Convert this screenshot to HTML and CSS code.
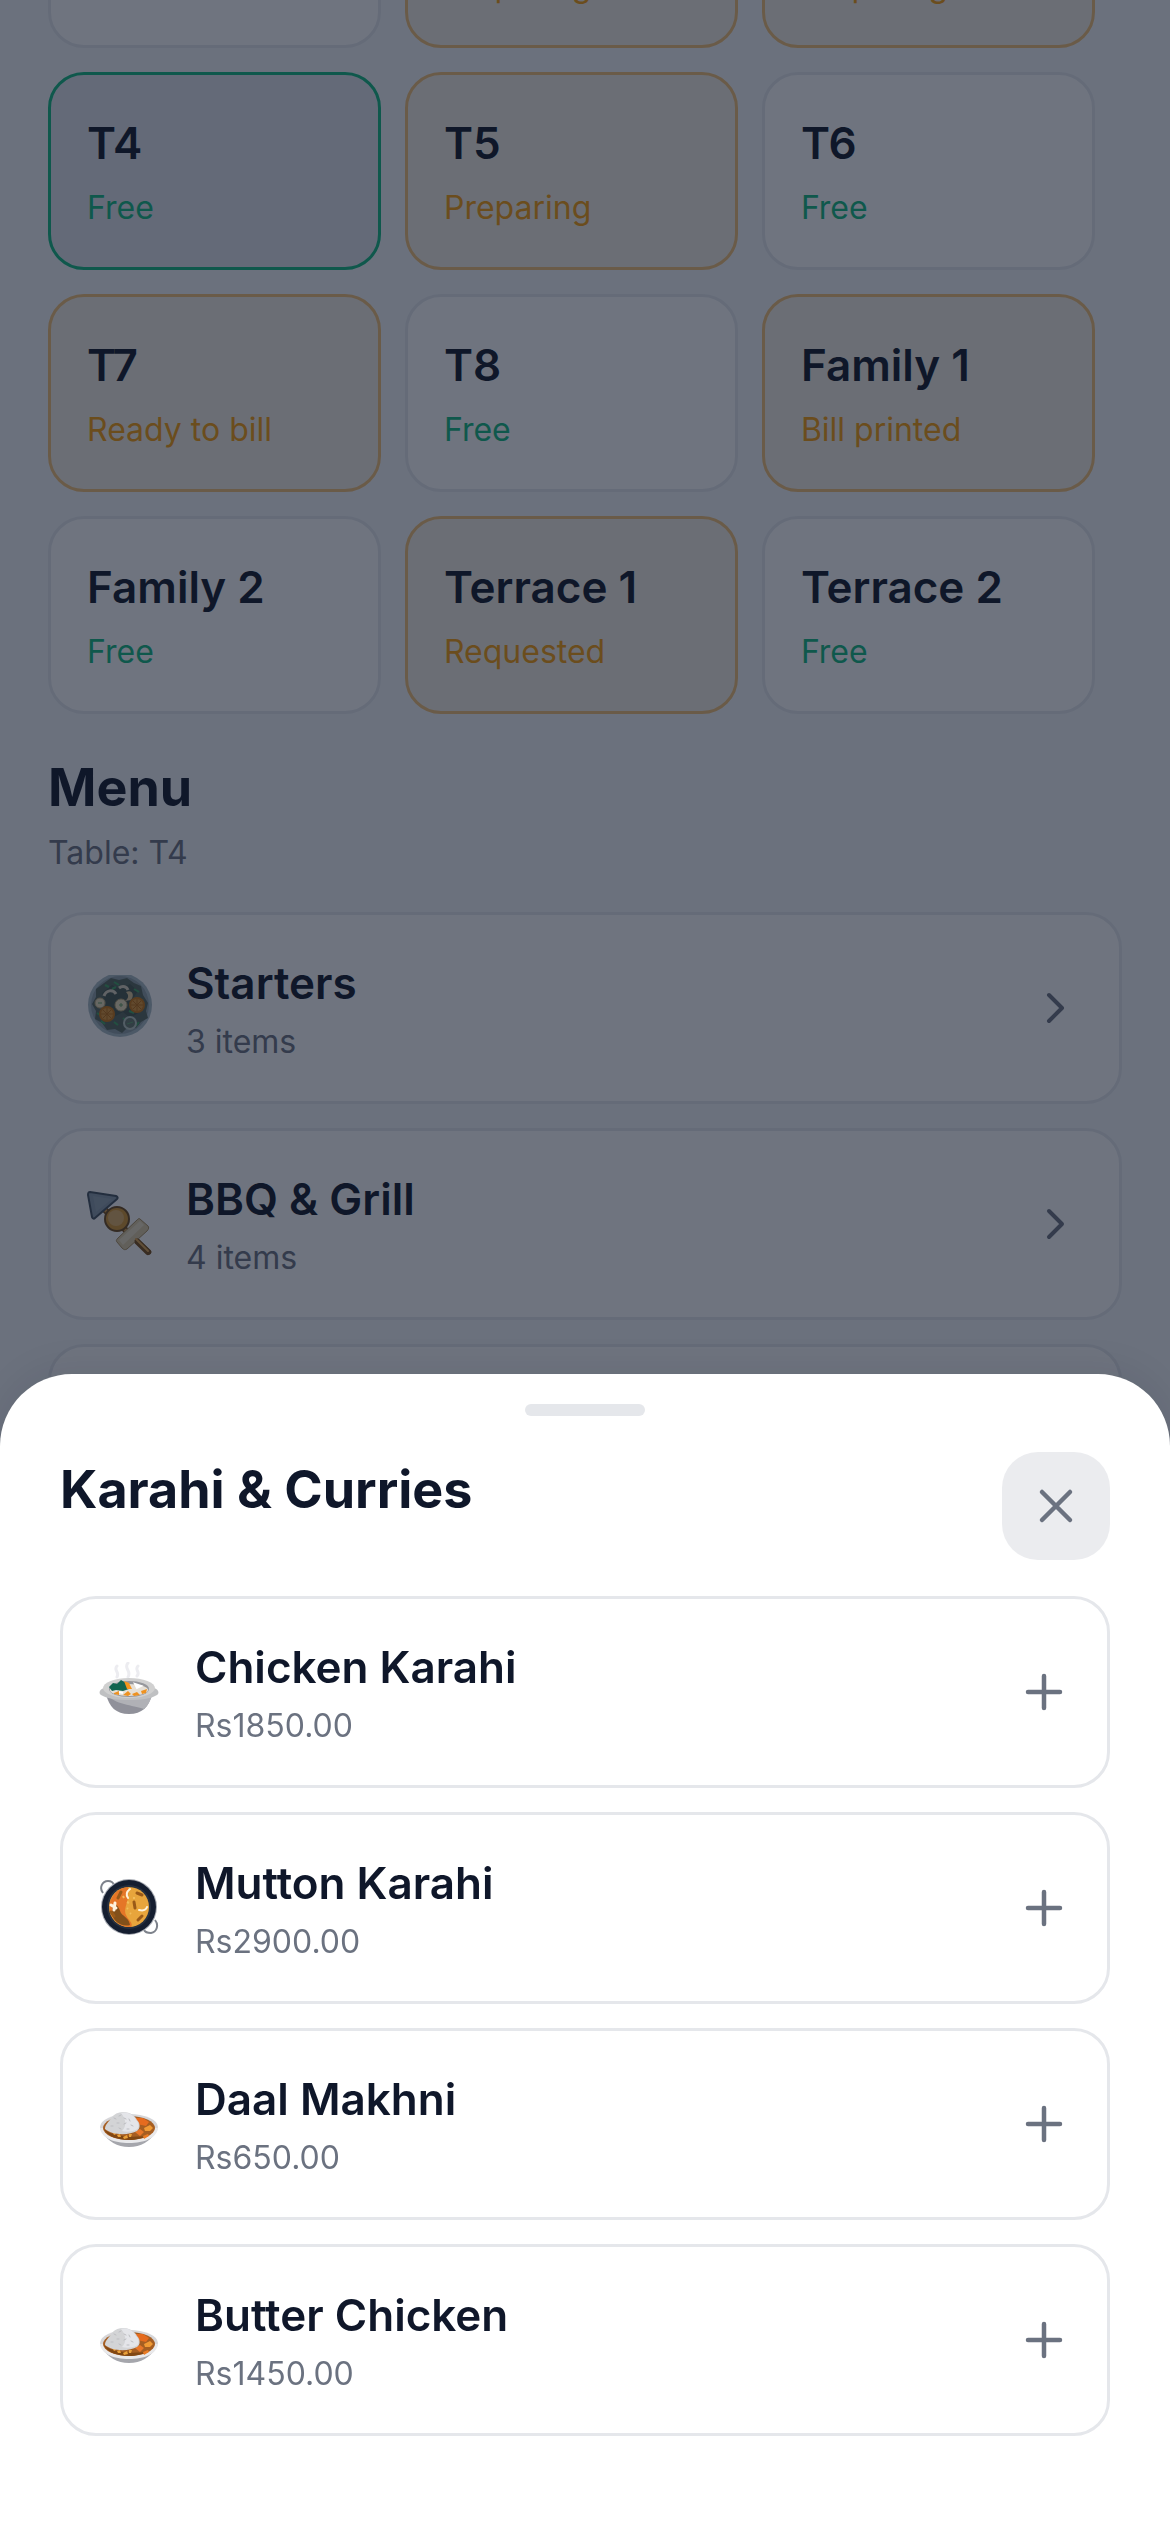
FILE: index.html
```html
<!DOCTYPE html>
<html lang="en">
<head>
	<meta charset="utf-8">
	<meta name="viewport" content="width=device-width, initial-scale=1">
	<title>Karahi &amp; Curries</title>
	<link rel="stylesheet" href="styles.css">
</head>
<body>
	<!-- shared icons -->
	<svg class="defs" aria-hidden="true">
		<symbol id="chevron" viewBox="0 0 54 54"><path d="M20 14l13 13-13 13" fill="none" stroke="currentColor" stroke-width="4" stroke-linecap="round" stroke-linejoin="round"/></symbol>
		<symbol id="plus" viewBox="0 0 54 54"><path d="M27 11v32M11 27h32" fill="none" stroke="currentColor" stroke-width="4.5" stroke-linecap="round"/></symbol>
		<symbol id="rice" viewBox="0 0 60 60">
			<ellipse cx="30" cy="33" rx="29" ry="13" fill="#d6d6d9"/>
			<path d="M3 38c6 9 15 15 27 15s21-6 27-15z" fill="#a5a6ac"/>
			<path d="M1 34c1 10 14 15 29 15s28-5 29-15z" fill="#e9e9eb"/>
			<ellipse cx="30" cy="34" rx="26" ry="12" fill="#a65e22"/>
			<path d="M5 35c3 7 13 11 25 11 7 0 14-2 18-4-12 1-34 2-43-7z" fill="#804713"/>
			<path d="M36 24l8 0 6 4-3 4-9-2z" fill="#e56b1f"/>
			<path d="M45 34l6-3 3 3-3 3-5 0z" fill="#f09a35"/>
			<path d="M36 38l5-3 4 3-4 4z" fill="#e8772a"/>
			<path d="M44 42l5-2 1 2-5 3z" fill="#ea7b24"/>
			<path d="M18 41l3-1 1 3-3 0zM24 43l4-2 1 3-4 1zM30 40l3 0-1 3-2 0zM14 39l2-1 1 2-2 1z" fill="#e9a13a"/>
			<path d="M6 35c0-5 4-7 6-11 3-4 7-6 12-6 8 0 12 4 14 8 3 3 4 8 0 11-7 4-24 5-32-2z" fill="#d3d4d6"/>
			<path d="M22 19c8-2 13 3 15 7 3 3 4 8 0 10-5 2-10 2-14 1 5-5 4-12-1-18z" fill="#e4e5e9"/>
			<path d="M15 24l2 1M20 22l2-1M25 24l2 1M30 25l1 2M18 29l2 0M25 30l2-1M32 31l2 1M12 32l2 0M20 34l2 1M28 35l2 0" stroke="#bcbdc1" stroke-width="1" stroke-linecap="round"/>
		</symbol>
	</svg>

	<main class="page">
		<div class="tables">
			<!-- row scrolled under the top edge -->
			<button class="tile" aria-label="Free"></button>
			<button class="tile busy"><span class="status">Preparing</span></button>
			<button class="tile busy"><span class="status">Preparing</span></button>

			<button class="tile selected"><span class="name">T4</span><span class="status">Free</span></button>
			<button class="tile busy"><span class="name">T5</span><span class="status">Preparing</span></button>
			<button class="tile"><span class="name">T6</span><span class="status">Free</span></button>
			<button class="tile busy"><span class="name">T7</span><span class="status">Ready to bill</span></button>
			<button class="tile"><span class="name">T8</span><span class="status">Free</span></button>
			<button class="tile busy"><span class="name">Family 1</span><span class="status">Bill printed</span></button>
			<button class="tile"><span class="name">Family 2</span><span class="status">Free</span></button>
			<button class="tile busy"><span class="name">Terrace 1</span><span class="status">Requested</span></button>
			<button class="tile"><span class="name">Terrace 2</span><span class="status">Free</span></button>
		</div>

		<h2 class="title">Menu</h2>
		<p class="sub">Table: T4</p>

		<div class="cards categories">
			<button class="card">
				<svg class="pic" viewBox="0 0 66 66" aria-hidden="true">
					<circle cx="33" cy="30" r="32" fill="#a9bbc4"/>
					<circle cx="33" cy="30" r="29" fill="#8d9ea5"/>
					<path d="M17 8l7-5 8 2 8-2 7 5 7 3 2 9 5 8-2 8 2 7-7 4-5 6-8-1-6 6-7-4-8 1-5-7-7-4 1-8-4-7 4-7 0-8z" fill="#56685e"/>
					<path d="M15 18l10-8 8 4 10-5 8 7-6 9 8 12-10 6-7-6-9 5-10-3 2-12z" fill="#46574f"/>
					<path d="M18 10l4 2M27 7l5 3M25 14l4-2M47 14l5 3M36 43l5 4M27 47l4 3M52 47l-3 4M42 36l5 2M14 46l4 3M10 38l3 2" stroke="#3fa463" stroke-width="2"/>
					<path d="M17 21c2-6 9-7 12-2M32 13c4-3 8-1 9 2" fill="none" stroke="#d9d3bd" stroke-width="3"/>
					<path d="M39 17c6-3 9 3 5 8l-6 1c4-3 4-6 1-9z" fill="#dcc596"/>
					<circle cx="13" cy="28" r="5" fill="#eadfba" stroke="#b9a675"/>
					<circle cx="34" cy="30" r="6" fill="#eee2bb" stroke="#b9a675"/>
					<path d="M11 28h4M32 30h4M34 28v4" stroke="#68a065" stroke-width="1"/>
					<circle cx="20" cy="39" r="8" fill="#c77410"/>
					<circle cx="20" cy="39" r="6" fill="#dc9434"/>
					<circle cx="50" cy="30" r="8" fill="#c77410"/>
					<circle cx="50" cy="30" r="6" fill="#dc9434"/>
					<path d="M20 33v12M14 39h12M16 35l8 8M24 35l-8 8M50 24v12M44 30h12M46 26l8 8M54 26l-8 8" stroke="#b86a10" stroke-width="1"/>
					<circle cx="43" cy="48" r="6" fill="#66796b" stroke="#b7c6bd" stroke-width="2"/>
					<path d="M40 49l6-2" stroke="#5fa572" stroke-width="1"/>
				</svg>
				<span class="text"><span class="name">Starters</span><span class="sub">3 items</span></span>
				<svg class="act"><use href="#chevron"/></svg>
			</button>
			<button class="card">
				<svg class="pic" viewBox="0 0 66 66" aria-hidden="true">
					<path d="M16 17l45 44" stroke="#774d18" stroke-width="6" stroke-linecap="round"/>
					<path d="M16 17l44 43" stroke="#d59a43" stroke-width="3" stroke-linecap="round"/>
					<path d="M3 1l26 4c2 1 2 2 1 3L8 27c-1 1-2 1-3-1L1 4c0-2 0-3 2-3z" fill="#8798a7" stroke="#42505e" stroke-width="2"/>
					<path d="M6 5l19 3L9 21z" fill="#92a2b0"/>
					<circle cx="30" cy="28" r="12" fill="#d2942e" stroke="#6d4a1c" stroke-width="2"/>
					<circle cx="29" cy="27" r="8" fill="#dfae65"/>
					<path d="M53 28l8 7c1 1 1 3-1 5L40 58c-2 1-3 1-5-1l-5-6c-1-1-1-2 1-4l19-18c1-1 2-2 3-1z" fill="#dccaa2" stroke="#a78d5d" stroke-width="1"/>
					<path d="M53 30l4 4-21 20-4-5z" fill="#eadfc1"/>
					<path d="M50 50l12 11" stroke="#774d18" stroke-width="5" stroke-linecap="round"/>
					<path d="M49 48l12 12" stroke="#dda34f" stroke-width="2" stroke-linecap="round"/>
				</svg>
				<span class="text"><span class="name">BBQ &amp; Grill</span><span class="sub">4 items</span></span>
				<svg class="act"><use href="#chevron"/></svg>
			</button>
			<button class="card" aria-label="Karahi &amp; Curries"></button>
		</div>
	</main>

	<div class="scrim"></div>

	<section class="sheet" role="dialog" aria-labelledby="sheet-title">
		<div class="handle"></div>
		<header class="head">
			<h2 class="title" id="sheet-title">Karahi &amp; Curries</h2>
			<button class="close" aria-label="Close">
				<svg viewBox="0 0 54 54"><path d="M13 13l28 28M41 13L13 41" fill="none" stroke="currentColor" stroke-width="4.5" stroke-linecap="round"/></svg>
			</button>
		</header>
		<div class="cards items">
			<button class="card">
				<svg class="pic" viewBox="0 0 60 60" aria-hidden="true">
					<path d="M18 4c-4 4 3 6 0 11M29 1c-5 5 4 8 0 14M39 4c-4 4 3 6-1 10" fill="none" stroke="#ececf0" stroke-width="3" stroke-linecap="round"/>
					<path d="M7 32c3 13 10 20 23 20s20-7 23-20z" fill="#90919a"/>
					<path d="M9 34c9 9 29 10 36 13 4-3 6-8 8-13z" fill="#b0b1b6"/>
					<path d="M5 26c-4 1-6 5-3 7 6 4 17 5 28 5s22-1 28-5c3-2 1-6-3-7z" fill="#bfc0c2"/>
					<ellipse cx="30" cy="26" rx="26" ry="10" fill="#d0d0d0"/>
					<ellipse cx="30" cy="27" rx="20" ry="8" fill="#96979c"/>
					<ellipse cx="30" cy="28" rx="19" ry="6" fill="#e6e0d6"/>
					<path d="M10 25l4-4 4 1 4-4 5 3 3 6-6 2-7-1-4 1z" fill="#126550"/>
					<path d="M25 19l5 2 3 6-5 0z" fill="#f5951d"/>
					<path d="M15 31l5-2 0 4-5-1zM24 33l5-4 3 3-3 2zM33 32l5-2 3 3-6 1zM42 29l6-2-1 4-4 1z" fill="#ee9221"/>
					<path d="M36 22l6 2-4 2zM20 30l4 1" stroke="#fff" stroke-width="2" fill="#fff"/>
				</svg>
				<span class="text"><span class="name">Chicken Karahi</span><span class="sub">Rs1850.00</span></span>
				<svg class="act"><use href="#plus"/></svg>
			</button>
			<button class="card">
				<svg class="pic" viewBox="0 0 60 60" aria-hidden="true">
					<path d="M4 15C0 10 3 3 9 3c3 0 5 1 6 4M56 42c4 5 2 12-4 13-4 0-6-1-7-3" fill="none" stroke="#7d828b" stroke-width="2"/>
					<circle cx="30" cy="29" r="28" fill="#a7abb3"/>
					<circle cx="30" cy="29" r="27" fill="#151e30"/>
					<circle cx="30" cy="29" r="22" fill="#27303f"/>
					<circle cx="30" cy="29" r="20" fill="#e8a53c"/>
					<path d="M29 9a20 20 0 1 0 3 40c3-4-3-7-5-12-3-8 4-13 2-28z" fill="#e57627"/>
					<path d="M14 27c5-1 6 4 8 8 3 4 8 5 9 12-7 2-16-2-18-11z" fill="#82501a"/>
					<path d="M12 27l5 3M16 25l-1 7" stroke="#fff2dc" stroke-width="3" stroke-linecap="round"/>
					<path d="M31 11c-4 3-4 6-2 9M40 32c4 1 7 0 8-3" fill="none" stroke="#fff3dc" stroke-width="2" stroke-linecap="round"/>
					<path d="M22 14l-3 6M38 15l5 2M35 24l1 6M43 38l-4 4M12 34l3 4" stroke="#9a5a18" stroke-width="3" stroke-linecap="round"/>
					<path d="M28 24l2 1M31 35l1 1M24 18l1 2M34 20l2 0M28 30l1 1" stroke="#f2bd5b" stroke-width="2"/>
				</svg>
				<span class="text"><span class="name">Mutton Karahi</span><span class="sub">Rs2900.00</span></span>
				<svg class="act"><use href="#plus"/></svg>
			</button>
			<button class="card">
				<svg class="pic" aria-hidden="true"><use href="#rice"/></svg>
				<span class="text"><span class="name">Daal Makhni</span><span class="sub">Rs650.00</span></span>
				<svg class="act"><use href="#plus"/></svg>
			</button>
			<button class="card">
				<svg class="pic" aria-hidden="true"><use href="#rice"/></svg>
				<span class="text"><span class="name">Butter Chicken</span><span class="sub">Rs1450.00</span></span>
				<svg class="act"><use href="#plus"/></svg>
			</button>
		</div>
	</section>
</body>
</html>
```

FILE: styles.css
```css
*{box-sizing: border-box}
body{margin: 0;height: 100vh;overflow: hidden;background: #f5f8fb;color: #0f172a;font-family: Inter, "Liberation Sans", sans-serif;}
button{font: inherit;color: inherit;text-align: left;border: none;margin: 0;cursor: pointer}
svg{display: block}
.defs{display: none}

.page{padding: 0 48px}
.title{margin: 0;font-size: 52px;line-height: 76px;font-weight: 700}
.name{font-size: 44px;line-height: 64px;font-weight: 600}
.status,.sub{font-size: 32px;line-height: 46px;margin: 0}
.sub{color: #6b7280}

/* tables */
.tables{display: grid;grid-template-columns: repeat(3, 31%);gap: 24px;margin-top: -76px;margin-bottom: 36px}
.tile{display: flex;flex-direction: column;gap: 10px;padding: 36px;background: #fff;border: 3px solid #e5e9ee;border-radius: 36px}
.tile .status{color: #10b981}
.tile.busy{background: #f5f0e6;border-color: #f2c077}
.tile.busy .status{color: #f59e0b}
.tile.selected{background: #e3e7ed;border-color: #10b981}
.page > .sub{margin: 4px 0 36px}

/* cards, both in the menu and in the sheet */
.cards{display: flex;flex-direction: column;gap: 24px}
.card{display: flex;align-items: center;width: 100%;min-height: 192px;padding: 36px;background: #fff;border: 3px solid #e5e7eb;border-radius: 36px}
.card .text{display: flex;flex-direction: column;gap: 4px;flex: 1}
.pic{width: 60px;height: 60px;margin-right: 36px}
.categories .card{border-color: #e5e9ee}
.categories .pic{width: 66px;height: 66px;margin-right: 33px}
.act{width: 54px;height: 54px;color: #6b7280}

.scrim{position: fixed;inset: 0;background: rgba(15, 23, 42, 0.6)}

/* bottom sheet */
.sheet{position: fixed;left: 0;right: 0;bottom: 0;padding: 30px 60px 96px;background: #fff;border-radius: 72px 72px 0 0;box-shadow: 0 -6px 36px rgba(15, 23, 42, 0.08)}
.handle{width: 120px;height: 12px;margin: 0 auto 36px;border-radius: 6px;background: #e5e7eb}
.head{display: flex;justify-content: space-between;align-items: flex-start;margin-bottom: 36px}
.close{display: flex;align-items: center;justify-content: center;width: 108px;height: 108px;padding: 0;border-radius: 36px;background: #ebecef;color: #6b7280}
.close svg{width: 54px;height: 54px}
```
